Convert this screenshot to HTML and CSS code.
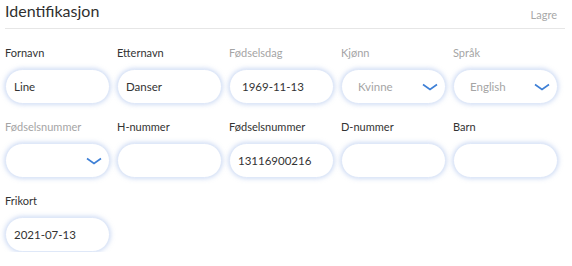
FILE: index.html
```
<!DOCTYPE html>
<html lang="no">
<head>
    <meta charset="UTF-8">
    <meta name="viewport" content="width=device-width, initial-scale=1.0">
    <title>Identifikasjon</title>
    <link rel="stylesheet" href="styles.css">
</head>
<body>
    <div class="panel">
        <div class="head">
            <h2 class="title">Identifikasjon</h2>
            <span class="save">Lagre</span>
        </div>
        <form class="fields">
            <div class="field">
                <label>Fornavn</label>
                <div class="box">Line</div>
            </div>
            <div class="field">
                <label>Etternavn</label>
                <div class="box">Danser</div>
            </div>
            <div class="field off">
                <label>Fødselsdag</label>
                <div class="box dark date">1969-11-13</div>
            </div>
            <div class="field off">
                <label>Kjønn</label>
                <div class="box select">Kvinne
                    <svg class="chev" width="16" height="8" viewBox="0 0 16 8"><path d="M1 1.5 L8 6.5 L15 1.5" fill="none" stroke="#3d7fd6" stroke-width="1.6"/></svg>
                </div>
            </div>
            <div class="field off">
                <label>Språk</label>
                <div class="box select">English
                    <svg class="chev" width="16" height="8" viewBox="0 0 16 8"><path d="M1 1.5 L8 6.5 L15 1.5" fill="none" stroke="#3d7fd6" stroke-width="1.6"/></svg>
                </div>
            </div>

            <div class="field off">
                <label>Fødselsnummer</label>
                <div class="box select">
                    <svg class="chev" width="16" height="8" viewBox="0 0 16 8"><path d="M1 1.5 L8 6.5 L15 1.5" fill="none" stroke="#3d7fd6" stroke-width="1.6"/></svg>
                </div>
            </div>
            <div class="field">
                <label>H-nummer</label>
                <div class="box"></div>
            </div>
            <div class="field">
                <label>Fødselsnummer</label>
                <div class="box">13116900216</div>
            </div>
            <div class="field">
                <label>D-nummer</label>
                <div class="box"></div>
            </div>
            <div class="field">
                <label>Barn</label>
                <div class="box"></div>
            </div>

            <div class="field">
                <label>Frikort</label>
                <div class="box">2021-07-13</div>
            </div>
        </form>
    </div>
</body>
</html>
```

FILE: styles.css
```
body {
    margin: 0;
    background: #fff;
    font-family: Lato, "Open Sans", sans-serif;
    color: #333;
}
.panel {
    padding: 0 7px 0 5px;
}
.head {
    display: flex;
    justify-content: space-between;
    align-items: center;
    height: 28px;
    border-bottom: 1px solid #e6e6e6;
}
.title {
    margin: 0;
    font-size: 16px;
    font-weight: 400;
    color: #2f2f2f;
    position: relative;
    top: -4px;
}
.save {
    font-size: 11px;
    color: #a8a8a8;
    padding-right: 8px;
}
.fields {
    display: grid;
    grid-template-columns: repeat(5, 105px);
    column-gap: 7px;
    row-gap: 15px;
    padding-top: 16px;
}
.field label {
    display: block;
    font-size: 11px;
    line-height: 16px;
    margin-bottom: 8px;
    color: #333;
}
.field.off label {
    color: #a5a5a5;
}
.box {
    height: 35px;
    box-sizing: border-box;
    border: 1px solid #dfe8f8;
    border-radius: 18px;
    box-shadow: 0 0 4px 1px rgba(165, 190, 235, 0.5);
    background: #fff;
    display: flex;
    align-items: center;
    padding: 0 8px;
    font-size: 11.5px;
    color: #333;
}
.field.off .box {
    color: #a5a5a5;
}
.field.off .box.dark {
    color: #333;
}
.date {
    padding-left: 12px;
}
.select {
    padding-left: 16px;
    justify-content: space-between;
}
.select .chev {
    margin-left: auto;
    margin-right: -1px;
}
```
